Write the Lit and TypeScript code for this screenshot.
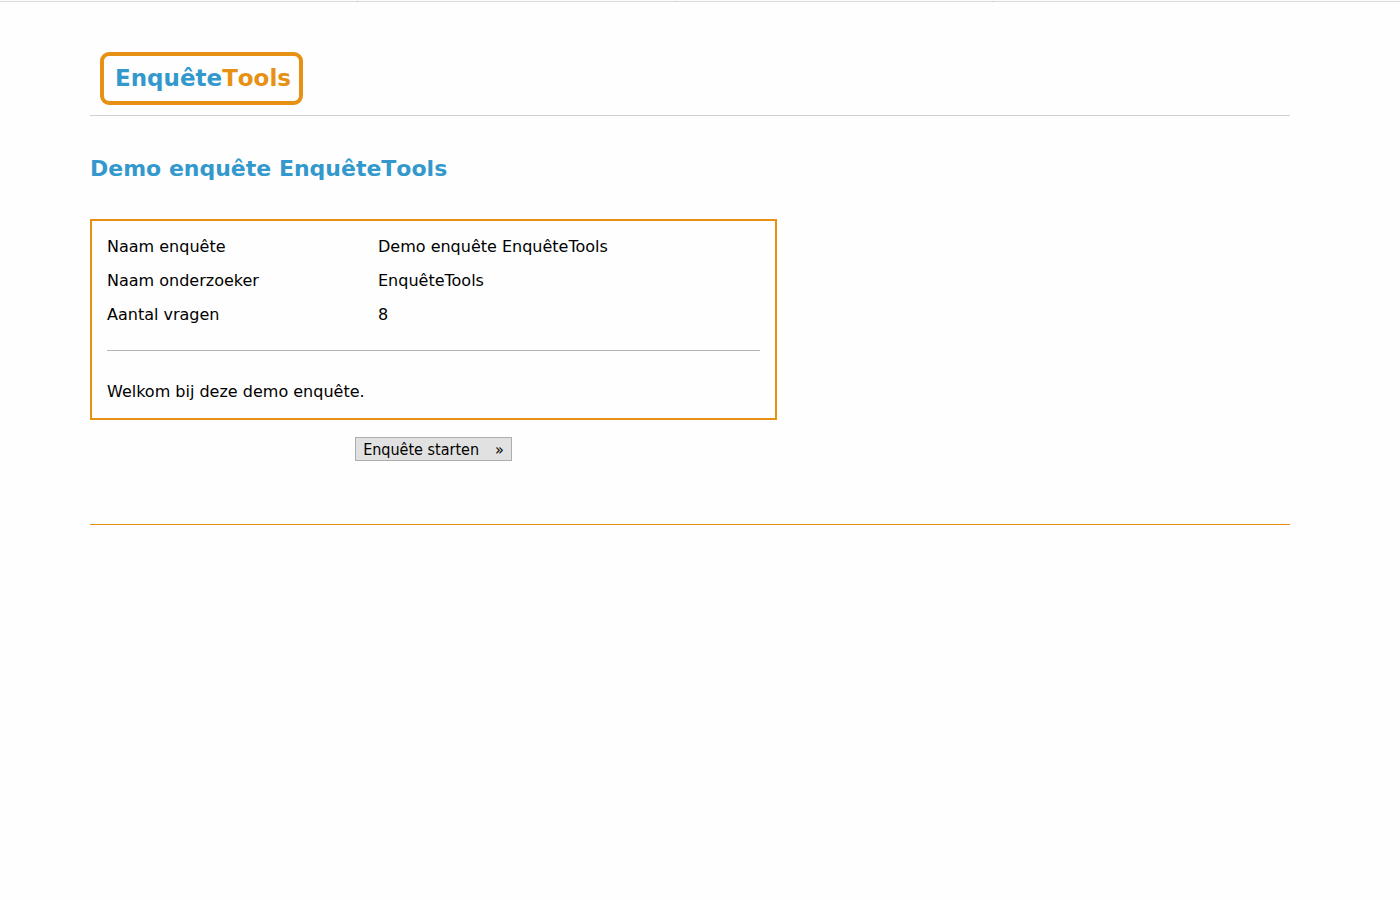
import { LitElement, html, css } from "lit";
import { customElement, state } from "lit/decorators.js";

interface Detail {
  label: string;
  value: string;
}

@customElement("app-root")
export class AppRoot extends LitElement {
  static styles = css`
    :host {
      display: block;
      min-height: 100vh;
      background: #fefefe;
      color: #000;
      font: 16px/20px Verdana, "DejaVu Sans", sans-serif;
    }
    .strip {
      display: flex;
      align-items: flex-end;
      gap: 317px;
      height: 2px;
      padding-left: 357px;
      overflow: hidden;
      background: linear-gradient(#f9faf9 50%, #dcdddc 50%);
    }
    .tick {
      flex: none;
      width: 1px;
      height: 1px;
      background: #b8b8b8;
    }
    .page {
      padding: 50px 110px 0 90px;
    }
    .header {
      display: flex;
      padding: 0 10px 10px;
      border-bottom: 1px solid #d0d0d0;
    }
    .logo {
      box-sizing: border-box;
      width: 203px;
      height: 53px;
      padding-left: 3px;
      border: 4px solid #e69113;
      border-radius: 9px;
      color: #3399cc;
      font-size: 23px;
      font-weight: bold;
      font-kerning: none;
      line-height: 45px;
      text-align: center;
      text-decoration: none;
      white-space: nowrap;
    }
    .accent {
      color: #e69113;
    }
    .title {
      margin: 39px 0 36px;
      color: #3399cc;
      font-size: 22px;
      font-kerning: none;
      line-height: 28px;
    }
    .survey {
      max-width: 687px;
    }
    .card {
      padding: 9px 15px 16px;
      border: 2px solid #e69113;
    }
    .details {
      width: 100%;
      border-collapse: collapse;
      table-layout: fixed;
    }
    .label,
    .value {
      padding: 7px 0;
      font-weight: normal;
      text-align: left;
    }
    .label {
      width: 271px;
    }
    .rule {
      margin: 18px 0 31px;
      border: 0;
      border-top: 1px solid #b2b2b2;
    }
    .intro {
      margin: 0;
    }
    .actions {
      display: flex;
      justify-content: center;
      padding: 17px 0 63px;
    }
    .start {
      display: flex;
      gap: 16px;
      padding: 2px 7px 0;
      border: 1px solid #adadad;
      border-radius: 0;
      background: #e1e1e1;
      color: #000;
      font: 16px/20px Tahoma, "DejaVu Sans Condensed", "DejaVu Sans", sans-serif;
    }
    .footer {
      border-top: 1px solid #e69113;
    }
  `;

  @state()
  private details: Detail[] = [
    { label: "Naam enquête", value: "Demo enquête EnquêteTools" },
    { label: "Naam onderzoeker", value: "EnquêteTools" },
    { label: "Aantal vragen", value: "8" },
  ];

  render() {
    return html`
      <div class="strip">
        <span class="tick"></span><span class="tick"></span><span class="tick"></span>
      </div>
      <div class="page">
        <header class="header">
          <a class="logo" href="#">Enquête<span class="accent">Tools</span></a>
        </header>
        <main>
          <h1 class="title">Demo enquête EnquêteTools</h1>
          <div class="survey">
            <section class="card">
              <table class="details">
                <tbody>
                  ${this.details.map(
                    (d) => html`<tr>
                      <th class="label" scope="row">${d.label}</th>
                      <td class="value">${d.value}</td>
                    </tr>`
                  )}
                </tbody>
              </table>
              <hr class="rule" />
              <p class="intro">Welkom bij deze demo enquête.</p>
            </section>
            <div class="actions">
              <button class="start" type="button">
                <span>Enquête starten</span><span>»</span>
              </button>
            </div>
          </div>
        </main>
        <footer class="footer"></footer>
      </div>
    `;
  }
}
